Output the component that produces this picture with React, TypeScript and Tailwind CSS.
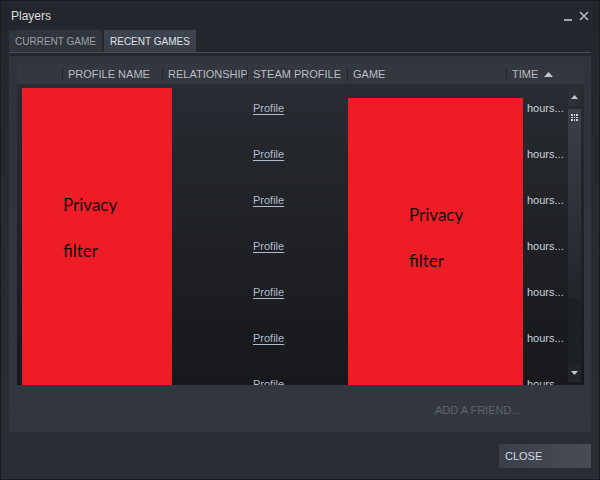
import { useState } from "react";

const columns = [
  { label: "", width: "w-[46px]" },
  { label: "PROFILE NAME", width: "w-[100px]" },
  { label: "RELATIONSHIP", width: "w-[85px]" },
  { label: "STEAM PROFILE", width: "w-[100px]" },
  { label: "GAME", width: "w-[159px]" },
];

const rows = Array.from({ length: 7 }, (_, i) => i);

function Tab({ label, active, width, onClick }: { label: string; active: boolean; width: string; onClick: () => void }) {
  return (
    <button
      type="button"
      onClick={onClick}
      className={
        active
          ? `h-[22px] ${width} px-[6px] text-left text-[10px] text-[#dfe3e7] bg-gradient-to-b from-[#3f4550] to-[#383d47]`
          : `h-[22px] ${width} px-[6px] text-left text-[10px] text-[#9aa1a8] bg-[#30343b]`
      }
    >
      {label}
    </button>
  );
}

function PrivacyBox({ className }: { className: string }) {
  return (
    <div
      className={`absolute bg-[#ee1c25] pt-[94px] text-[17px] leading-[46px] text-[#111] ${className}`}
      style={{ fontFamily: "Lato, 'Noto Sans', sans-serif" }}
    >
      <div>Privacy</div>
      <div>filter</div>
    </div>
  );
}

export default function App() {
  const [tab, setTab] = useState("recent");

  return (
    <div
      className="flex h-[480px] w-[600px] flex-col border border-[#161b24] bg-gradient-to-b from-[#23262c] to-[#2a2d33]"
      style={{ fontFamily: "'Liberation Sans', Arial, sans-serif" }}
    >
      {/* title bar */}
      <div className="flex h-[29px] items-center justify-between pl-[10px] pr-[10px]">
        <span className="text-[12px] text-[#dcdedf]">Players</span>
        <div className="flex items-center gap-[7px] text-[#b3b7bc]">
          <span className="mt-[9px] block h-[2px] w-[8px] bg-[#9ea2a7]" />
          <svg width="10" height="10" viewBox="0 0 10 10">
            <path d="M1 1 L9 9 M9 1 L1 9" stroke="#b3b7bc" strokeWidth="1.6" />
          </svg>
        </div>
      </div>

      <div className="flex flex-1 flex-col px-[8px]">
        {/* tabs */}
        <div className="flex gap-[2px] border-b border-[#484d55]">
          <Tab label="CURRENT GAME" width="w-[93px]" active={tab === "current"} onClick={() => setTab("current")} />
          <Tab label="RECENT GAMES" width="w-[92px]" active={tab === "recent"} onClick={() => setTab("recent")} />
        </div>

        {/* main panel */}
        <div className="mt-[3px] flex h-[376px] flex-col bg-gradient-to-b from-[#2f333b] to-[#32363e] pl-[8px] pr-[7px] pt-[8px]">
          {/* table */}
          <div className="flex h-[321px] flex-col">
            <div className="flex h-[20px] items-center bg-[#33373f] text-[11px] text-[#b9bdc1]">
              {columns.map((c, i) => (
                <div
                  key={i}
                  className={`flex h-[14px] shrink-0 items-center overflow-hidden whitespace-nowrap border-r border-[#23262b] pr-[6px] ${c.width} ${
                    i > 0 ? "pl-[5px]" : ""
                  }`}
                >
                  {c.label}
                </div>
              ))}
              <div className="flex items-center gap-[6px] pl-[5px]">
                TIME
                <svg width="9" height="5" viewBox="0 0 9 5">
                  <path d="M0 5 L4.5 0 L9 5 Z" fill="#c3c7cb" />
                </svg>
              </div>
            </div>

            <div className="relative flex flex-1 overflow-hidden bg-gradient-to-b from-[#282b31] to-[#16181b] pr-[3px]">
              <div className="flex-1 pt-[1px]">
                {rows.map((r) => (
                  <div key={r} className="flex h-[46px] items-center text-[11px]">
                    <div className="w-[236px] shrink-0" />
                    <div className="w-[100px] shrink-0">
                      <span className="text-[#aebccb] underline underline-offset-[2px]">Profile</span>
                    </div>
                    <div className="w-[159px] shrink-0" />
                    <div className="pl-[15px] text-[#c9d2db]">hours...</div>
                  </div>
                ))}
              </div>

              {/* scrollbar */}
              <div className="flex w-[13px] shrink-0 flex-col pb-[3px] pt-[3px]">
                <div className="flex h-[19px] items-center justify-center bg-[#2b2f36]">
                  <svg width="7" height="4" viewBox="0 0 7 4">
                    <path d="M0 4 L3.5 0 L7 4 Z" fill="#c3c7cb" />
                  </svg>
                </div>
                <div className="mt-[3px] flex h-[190px] justify-center bg-gradient-to-b from-[#3b4049] to-[#22252a] pt-[5px]">
                  <div className="grid h-[7px] w-[7px] grid-cols-3 gap-[1px]">
                    {Array.from({ length: 9 }, (_, i) => (
                      <span key={i} className="block h-[1.5px] w-[1.5px] bg-[#c9cdd1]" />
                    ))}
                  </div>
                </div>
                <div className="flex-1 bg-[#1d2024]" />
                <div className="flex h-[18px] items-center justify-center bg-[#22252a]">
                  <svg width="7" height="4" viewBox="0 0 7 4">
                    <path d="M0 0 L3.5 4 L7 0 Z" fill="#c3c7cb" />
                  </svg>
                </div>
              </div>

              <PrivacyBox className="left-[5px] top-[4px] h-[320px] w-[150px] pl-[41px]" />
              <PrivacyBox className="left-[331px] top-[14px] h-[320px] w-[175px] pl-[61px]" />
            </div>
          </div>

          {/* add friend */}
          <div className="mt-[13px] flex justify-end pr-[1px]">
            <div className="flex h-[24px] w-[154px] items-center bg-[#33373f] pl-[6px] text-[11px] text-[#5f656e]">
              ADD A FRIEND...
            </div>
          </div>
        </div>

        {/* footer */}
        <div className="flex justify-end pt-[12px]">
          <button
            type="button"
            className="h-[24px] w-[92px] bg-gradient-to-r from-[#3a3f49] to-[#474c56] pl-[6px] text-left text-[11px] text-[#d3dbe3]"
          >
            CLOSE
          </button>
        </div>
      </div>
    </div>
  );
}
